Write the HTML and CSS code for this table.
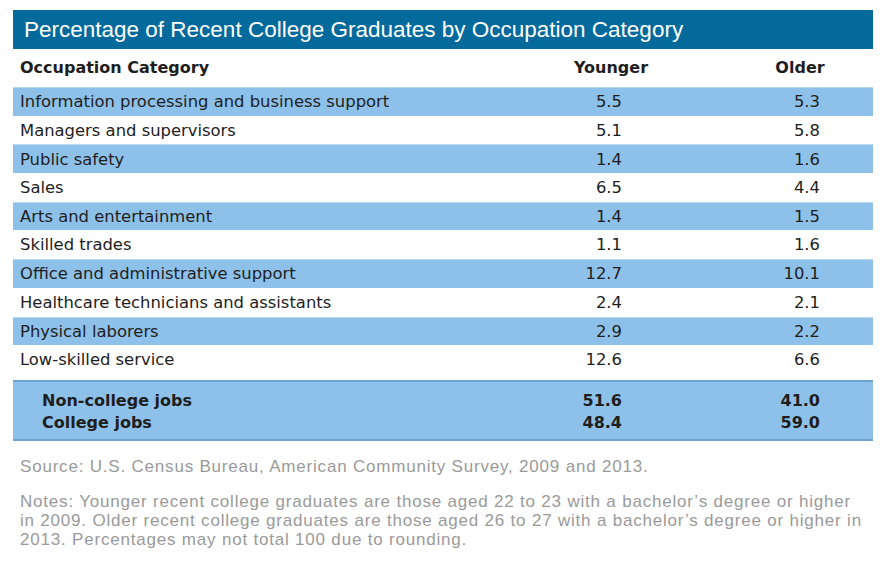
FILE: index.html
```html
<!DOCTYPE html>
<html>
<head>
<meta charset="utf-8">
<link rel="stylesheet" href="styles.css">
</head>
<body>
<div class="wrap">
  <div class="title">Percentage of Recent College Graduates by Occupation Category</div>
  <div class="row head">
    <div class="cat">Occupation Category</div>
    <div class="hnum">Younger</div>
    <div class="hnum">Older</div>
  </div>
  <div class="row alt"><div class="cat">Information processing and business support</div><div class="num y">5.5</div><div class="num o">5.3</div></div>
  <div class="row"><div class="cat">Managers and supervisors</div><div class="num y">5.1</div><div class="num o">5.8</div></div>
  <div class="row alt"><div class="cat">Public safety</div><div class="num y">1.4</div><div class="num o">1.6</div></div>
  <div class="row"><div class="cat">Sales</div><div class="num y">6.5</div><div class="num o">4.4</div></div>
  <div class="row alt"><div class="cat">Arts and entertainment</div><div class="num y">1.4</div><div class="num o">1.5</div></div>
  <div class="row"><div class="cat">Skilled trades</div><div class="num y">1.1</div><div class="num o">1.6</div></div>
  <div class="row alt"><div class="cat">Office and administrative support</div><div class="num y">12.7</div><div class="num o">10.1</div></div>
  <div class="row"><div class="cat">Healthcare technicians and assistants</div><div class="num y">2.4</div><div class="num o">2.1</div></div>
  <div class="row alt"><div class="cat">Physical laborers</div><div class="num y">2.9</div><div class="num o">2.2</div></div>
  <div class="row"><div class="cat">Low-skilled service</div><div class="num y">12.6</div><div class="num o">6.6</div></div>
  <div class="summary">
    <div class="srow"><div class="cat">Non-college jobs</div><div class="num y">51.6</div><div class="num o">41.0</div></div>
    <div class="srow"><div class="cat">College jobs</div><div class="num y">48.4</div><div class="num o">59.0</div></div>
  </div>
  <p class="source">Source: U.S. Census Bureau, American Community Survey, 2009 and 2013.</p>
  <p class="notes">Notes: Younger recent college graduates are those aged 22 to 23 with a bachelor’s degree or higher in 2009. Older recent college graduates are those aged 26 to 27 with a bachelor’s degree or higher in 2013. Percentages may not total 100 due to rounding.</p>
</div>
</body>
</html>
```
FILE: styles.css
```css
html, body {
  margin: 0;
  padding: 0;
  background: #ffffff;
}
.wrap {
  margin: 10px 0 0 13px;
  width: 860px;
  font-family: "DejaVu Sans", Verdana, sans-serif;
  color: #1e1e1e;
}
.title {
  height: 39px;
  background: #046a9c;
  color: #ffffff;
  font-family: "Liberation Sans", Arial, sans-serif;
  font-size: 22.5px;
  line-height: 40px;
  padding-left: 11px;
}
.row, .srow {
  display: grid;
  grid-template-columns: 482px 232px 1fr;
  align-items: center;
}
.row {
  height: 28.7px;
  font-size: 16.4px;
  box-sizing: border-box;
}
.row.alt {
  background: #8ec1e9;
  border-top: 1px solid #b8d8f0;
}
.row.head {
  height: 38px;
  font-weight: bold;
  font-size: 16px;
  padding-bottom: 2px;
}
.cat {
  padding-left: 7px;
  white-space: nowrap;
}
.hnum {
  text-align: center;
}
.num {
  text-align: right;
}
.num.y {
  padding-right: 105px;
}
.num.o {
  padding-right: 53px;
}
.summary {
  margin-top: 6px;
  background: #8ec1e9;
  border-top: 2px solid #6ea3d0;
  border-bottom: 2px solid #6ea3d0;
  padding: 8px 0 6px;
  box-sizing: border-box;
  height: 61px;
}
.srow {
  height: 22px;
  font-weight: bold;
  font-size: 16px;
}
.srow .cat {
  padding-left: 29px;
}
.source, .notes {
  font-family: "Liberation Sans", Arial, sans-serif;
  color: #9a9a9a;
  font-size: 17px;
  letter-spacing: 0.8px;
  margin: 0;
  padding-left: 7px;
}
.source {
  margin-top: 16px;
  line-height: 19px;
}
.notes {
  margin-top: 16px;
  line-height: 19px;
  padding-right: 8px;
}
```
